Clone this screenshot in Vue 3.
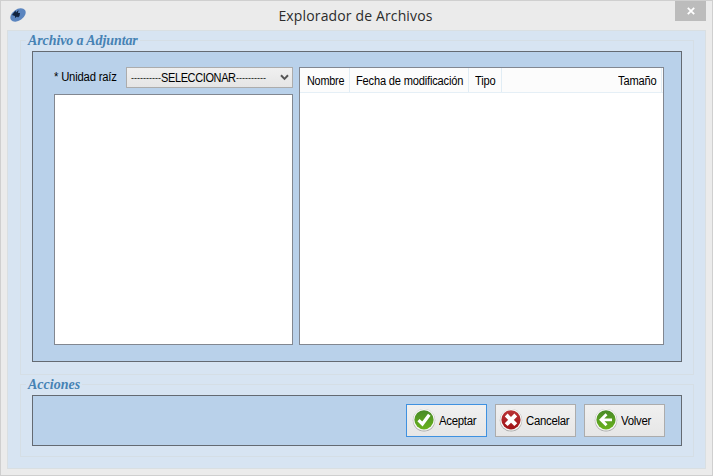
<script setup>
const columns = [
  { label: 'Nombre', cls: 'name' },
  { label: 'Fecha de modificación', cls: 'date' },
  { label: 'Tipo', cls: 'type' },
  { label: 'Tamaño', cls: 'size' },
]
const actions = [
  { label: 'Aceptar', kind: 'accept' },
  { label: 'Cancelar', kind: 'cancel' },
  { label: 'Volver', kind: 'back' },
]
</script>

<template>
  <div class="window">
    <header class="titlebar">
      <svg class="app-icon" width="18" height="16" viewBox="0 0 18 16">
        <ellipse cx="9" cy="8" rx="8.5" ry="5.6" transform="rotate(-35 9 8)" fill="#5b85bf" />
        <path d="M3 8 6.5 3.5 7 5.5 9.5 3 9 6 11 6 10.5 9 9 10.5 8 9.5 6 11 6 9Z" fill="#10233f" />
      </svg>
      <h1 class="title">Explorador de Archivos</h1>
      <button class="close" aria-label="Cerrar">
        <svg width="8" height="8" viewBox="0 0 8 8"><path d="M.8 .8 7.2 7.2M7.2 .8 .8 7.2" stroke="#fff" stroke-width="1.8" /></svg>
      </button>
    </header>
    <main class="client">
      <section class="group files">
        <h2 class="legend legend-files">Archivo a Adjuntar</h2>
        <div class="panel browser">
          <div class="left">
            <div class="drive">
              <label class="drive-label">* Unidad raíz</label>
              <div class="combo">
                <span class="combo-text"><span class="dashes">----------</span><span class="word">SELECCIONAR</span><span class="dashes">----------</span></span>
                <svg width="9" height="7" viewBox="0 0 9 7"><path d="M1 1.3 4.5 4.9 8 1.3" fill="none" stroke="#555" stroke-width="2" /></svg>
              </div>
            </div>
            <div class="box tree"></div>
          </div>
          <div class="box list">
            <div class="head">
              <div v-for="c in columns" :key="c.cls" class="col" :class="c.cls"><span class="col-text">{{ c.label }}</span></div>
            </div>
          </div>
        </div>
      </section>
      <section class="group actions">
        <h2 class="legend legend-actions">Acciones</h2>
        <div class="panel bar">
          <button v-for="a in actions" :key="a.kind" class="btn" :class="a.kind">
            <svg width="24" height="24" viewBox="0 0 24 24">
              <defs>
                <linearGradient :id="'g-' + a.kind" x1="0" y1="0" x2="0" y2="1">
                  <stop offset="0" :stop-color="a.kind === 'cancel' ? '#b93436' : '#488a28'" />
                  <stop offset="1" :stop-color="a.kind === 'cancel' ? '#a01217' : '#69b21c'" />
                </linearGradient>
              </defs>
              <circle cx="12" cy="12.3" r="11.2" fill="#a9aaa9" />
              <circle cx="12" cy="11.8" r="10.8" fill="#f6f7f5" />
              <circle cx="12" cy="11.8" r="9.6" :fill="'url(#g-' + a.kind + ')'" />
              <path v-if="a.kind === 'accept'" d="M6.5 12.2 10.4 16 17.3 6.8" fill="none" stroke="#fff" stroke-width="3.2" />
              <path v-else-if="a.kind === 'cancel'" d="M7.2 7 16.8 16.6M16.8 7 7.2 16.6" stroke="#fff" stroke-width="4" />
              <path v-else d="M18 11.8H7.5M12.5 6.3 7 11.8 12.5 17.3" fill="none" stroke="#fff" stroke-width="2.8" />
            </svg>
            <span class="btn-text">{{ a.label }}</span>
          </button>
        </div>
      </section>
    </main>
  </div>
</template>

<style>
body { margin: 0; background: #ebebeb; }
</style>

<style scoped>
* { box-sizing: border-box; }
.window {
  width: 713px; height: 476px;
  background: #ebebeb;
  border: 1px solid #cfcfcf;
  padding: 0 6px 6px;
  display: flex; flex-direction: column;
  font: 12px/14px "Liberation Sans", sans-serif;
  color: #000;
}
.titlebar { height: 29px; flex: none; display: grid; grid-template-columns: 32px 1fr 32px; }
.app-icon { margin: 6px 0 0 2px; }
.title {
  margin: 4px 0 0 -2px; text-align: center; white-space: nowrap;
  font: 400 14px/21px "Open Sans", sans-serif; letter-spacing: .14px; color: #2c2c2c;
}
.close {
  width: 31px; height: 20px; padding: 0; border: 0; margin-left: 1px; background: #bcbcbc;
  display: flex; align-items: center; justify-content: center;
}
.client {
  height: 439px; background: #d7e4f2; border: 1px solid #d9dfe2;
  padding: 9px 11px 0 12px;
  display: flex; flex-direction: column; gap: 9px;
}
.group { border: 1px solid #d5dee5; padding: 0 11px; }
.files { height: 335px; }
.actions { height: 73px; }
.legend {
  width: max-content; height: 16px; margin: -8px 0 2px -6px; padding: 0 2px;
  background: #d7e4f2; color: #4682b4; white-space: nowrap;
  font: italic bold 14px/16px "Liberation Serif", serif;
}
.legend-files { letter-spacing: -.1px; }
.panel { background: #b9d1ea; border: 1px solid #646a72; }
.browser { height: 311px; padding: 15px 17px 0 21px; display: flex; gap: 6px; }
.left { width: 239px; }
.drive { height: 21px; display: flex; justify-content: space-between; }
.drive-label {
  width: 68px; line-height: 20px; letter-spacing: -.2px; white-space: nowrap;
  transform: scaleX(.94); transform-origin: left;
}
.combo {
  width: 167px; height: 21px; padding: 0 3px 0 4px; border: 1px solid #acacac;
  background: linear-gradient(#f0f0f0, #e5e5e5);
  display: flex; align-items: center; justify-content: space-between;
}
.combo-text { display: flex; align-items: center; white-space: nowrap; }
.dashes { width: 30px; font-size: 9px; }
.word { width: 75px; letter-spacing: -.4px; transform: scaleX(.915); transform-origin: left; }
.box { background: #fff; border: 1px solid #828790; }
.tree { height: 251px; margin-top: 6px; }
.list { width: 365px; height: 278px; }
.head { height: 25px; display: flex; background: #fcfcfc; border-bottom: 1px solid #e5eff6; }
.col { border-right: 1px solid #e1edf5; padding: 6px 5px 0 6px; white-space: nowrap; letter-spacing: -.2px; }
.col-text { display: inline-block; transform: scaleX(.925); transform-origin: left; }
.name { width: 50px; padding-left: 7px; }
.name .col-text { transform: scaleX(.9); }
.date { width: 119px; }
.type { width: 33px; }
.size { width: 160px; text-align: right; }
.size .col-text { transform-origin: right; }
.bar { height: 51px; padding: 8px 16px 0 0; display: flex; justify-content: flex-end; gap: 8px; }
.btn {
  width: 81px; height: 33px; padding: 0; border: 1px solid #acacac;
  background: linear-gradient(#f0f0f0, #e6e6e6);
  display: flex; align-items: center; color: #000;
  font: 12px/14px "Liberation Sans", sans-serif; letter-spacing: -.3px;
}
.btn svg { flex: none; margin: -1px 2px 0 5px; }
.btn-text { margin-left: 1px; transform: scaleX(.95); transform-origin: left; }
.accept { border-color: #3f91e0; }
.cancel svg { margin-left: 3px; }
.back svg { margin-left: 9px; }
</style>
